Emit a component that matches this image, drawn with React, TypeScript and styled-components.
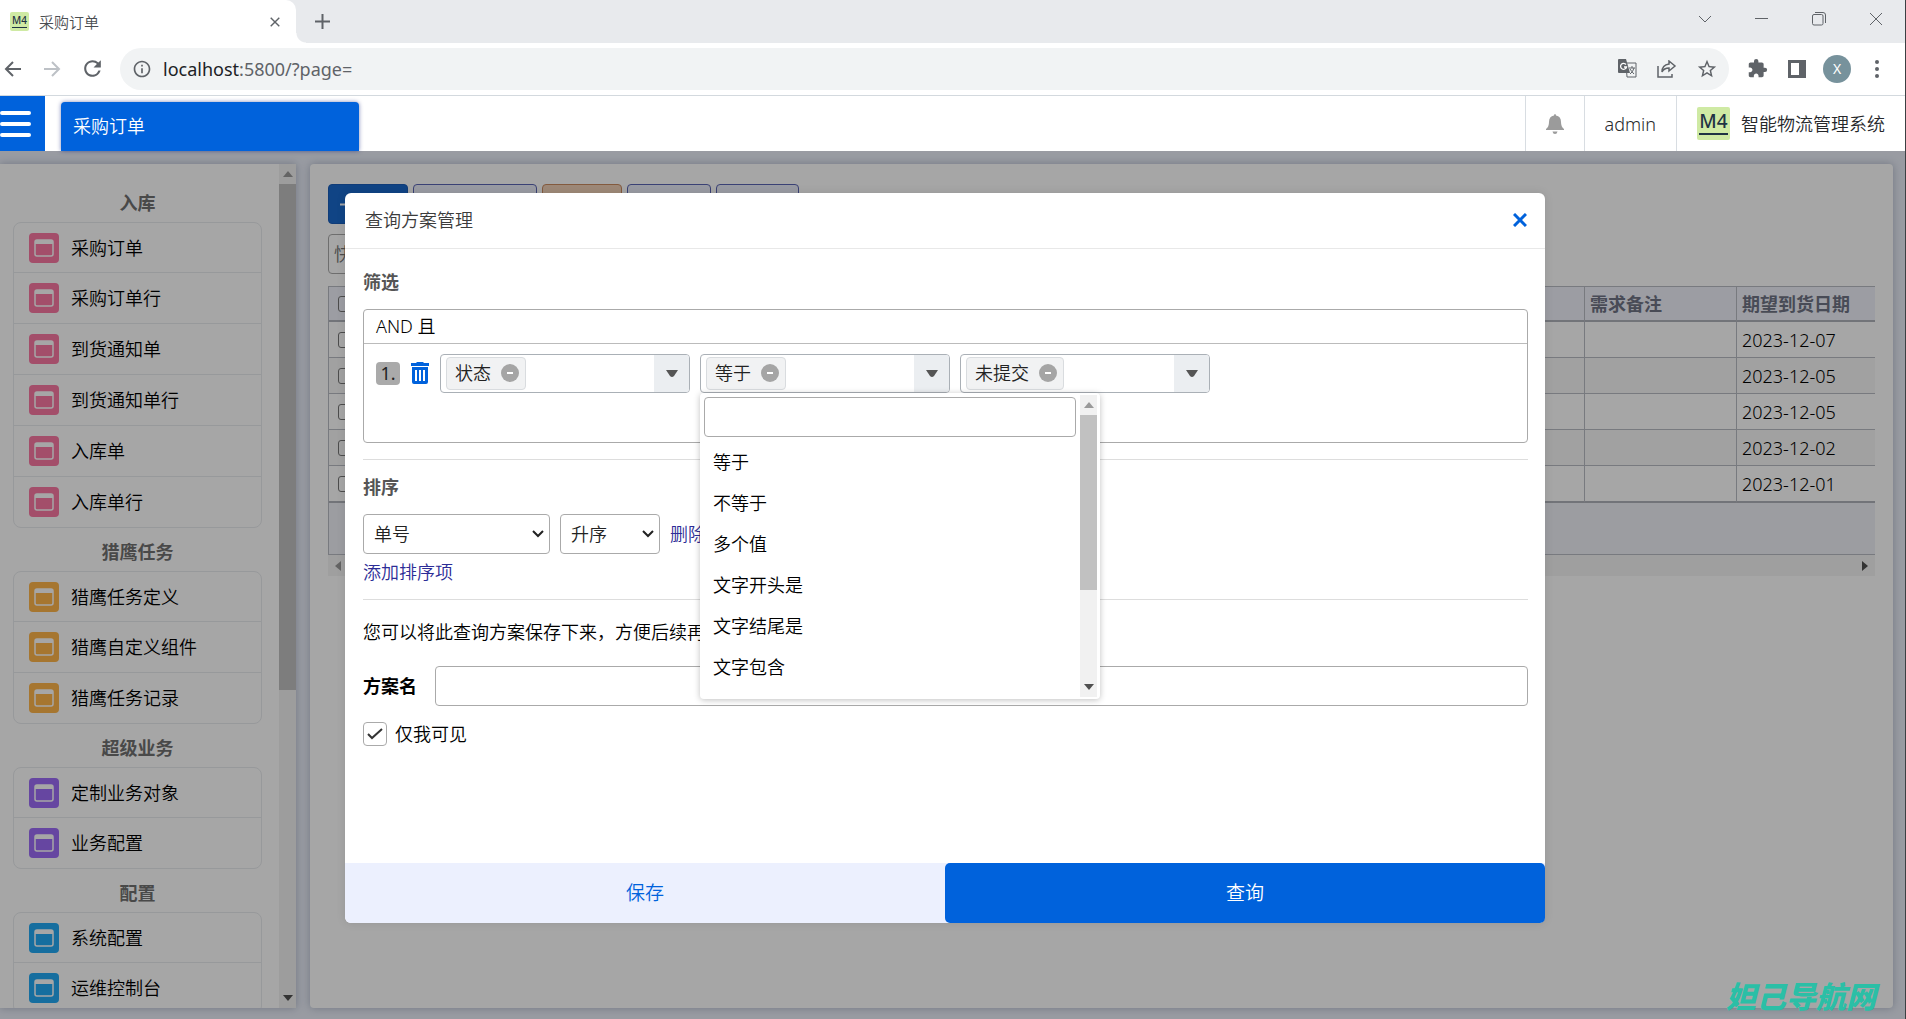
import React, { useState } from 'react';
import styled, { createGlobalStyle } from 'styled-components';
import { MdExtension, MdStarBorder, MdRefresh, MdInfoOutline } from 'react-icons/md';

const FONT = '"Noto Sans", "Noto Sans CJK SC", sans-serif';
const BLUE = '#0062dc';

const Global = createGlobalStyle`
  *, *::before, *::after { box-sizing: border-box; }
  html, body, #root { height: 100%; }
  body { margin: 0; overflow: hidden; font: 350 18px/24px ${FONT}; color: #000; }
  button, input, select { font: inherit; color: inherit; }
  button { padding: 0; border: 0; background: none; cursor: pointer; }
  svg { display: block; flex: none; }
  ul { list-style: none; margin: 0; padding: 0; }
`;

/* ---------- browser frame ---------- */

const Window = styled.div`
  display: flex;
  flex-direction: column;
  height: 100vh;
  border-right: 1px solid #3c4043;
`;

const TabStrip = styled.div`
  display: flex;
  flex: none;
  height: 43px;
  background: #e8eaed;
`;

const BrowserTab = styled.div`
  display: flex;
  align-items: center;
  width: 296px;
  padding: 0 14px 0 10px;
  gap: 10px;
  background: #fff;
  border-top-right-radius: 10px;
  font-size: 15px;
  color: #4a4d51;
`;

const TabTitle = styled.span`
  flex: 1;
`;

const TabFlare = styled.div`
  align-self: flex-end;
  width: 10px;
  height: 10px;
  background: radial-gradient(circle at 100% 0, transparent 9px, #fff 10px);
`;

const IconButton = styled.button<{ $w?: number; $color?: string }>`
  display: flex;
  align-items: center;
  justify-content: center;
  width: ${p => p.$w ?? 24}px;
  color: ${p => p.$color ?? '#5f6368'};
`;

const WindowButtons = styled.div`
  display: flex;
  margin-left: auto;
  padding-bottom: 6px;
`;

const Toolbar = styled.div`
  display: flex;
  flex: none;
  align-items: center;
  height: 53px;
  padding: 0 8px 1px 0;
  background: #fff;
  border-bottom: 1px solid #d3d9de;
`;

const NavButtons = styled.div`
  display: flex;
  width: 120px;
`;

const UrlBar = styled.div`
  display: flex;
  flex: 1;
  align-items: center;
  height: 42px;
  margin-right: 8px;
  padding: 0 2px 0 10px;
  border-radius: 21px;
  background: #f1f3f4;
`;

const Url = styled.p`
  flex: 1;
  margin: 0 0 0 9px;
  color: #5f6368;
  font-weight: 400;

  b { font-weight: 400; color: #202124; }
`;

const Avatar = styled.span`
  display: grid;
  place-items: center;
  width: 28px;
  height: 28px;
  margin: 0 6px;
  border-radius: 50%;
  background: #77929c;
  color: #fff;
  font-size: 14px;
  font-weight: 400;
  line-height: 20px;
`;

const M4 = styled.span<{ $small?: boolean }>`
  display: flex;
  justify-content: center;
  width: ${p => (p.$small ? 19 : 33)}px;
  height: ${p => (p.$small ? 19 : 33)}px;
  padding: ${p => (p.$small ? 1 : 3)}px 2px;
  border-radius: 2px;
  background: #cfeaa4;
  color: #1f3344;
  font-size: ${p => (p.$small ? 10 : 19)}px;
  font-weight: 500;
  line-height: ${p => (p.$small ? 14 : 23)}px;

  span {
    width: 100%;
    height: ${p => (p.$small ? 15 : 25)}px;
    border-bottom: ${p => (p.$small ? 1 : 2)}px solid #1f3344;
    text-align: center;
  }
`;

/* ---------- application ---------- */

const Application = styled.div`
  position: relative;
  display: flex;
  flex: 1;
  flex-direction: column;
  min-height: 0;
  overflow: hidden;
`;

const Header = styled.header`
  position: relative;
  z-index: 2;
  display: flex;
  flex: none;
  height: 55px;
  background: #fff;
`;

const MenuButton = styled.button`
  display: flex;
  align-items: center;
  width: 45px;
  margin-right: 16px;
  background: ${BLUE};
  color: #fff;
`;

const PageTab = styled.button`
  width: 298px;
  margin-top: 6px;
  padding: 0 12px 2px;
  border-radius: 4px 4px 0 0;
  background: ${BLUE};
  box-shadow: 0 0 4px rgba(0, 20, 120, 0.5);
  color: #fff;
  text-align: left;
`;

const HeaderCells = styled.div`
  display: flex;
  margin-left: auto;
`;

const HeaderCell = styled.div`
  display: flex;
  align-items: center;
  gap: 11px;
  padding: 0 20px;
  border-left: 1px solid #d8dde2;
  color: #26282b;
`;

const Workspace = styled.div`
  display: flex;
  flex: 1;
  gap: 14px;
  min-height: 0;
  padding: 13px 12px 11px 0;
  background: #ebeff9;
`;

const panelShadow = '0 0 8px rgba(60, 75, 110, 0.35)';

const Sidebar = styled.nav`
  display: flex;
  width: 296px;
  background: #fff;
  box-shadow: ${panelShadow};
  overflow: hidden;
`;

const SidebarScroll = styled.div`
  flex: 1;
  min-width: 0;
  padding: 15px 17px 0 13px;
  overflow: hidden;
`;

const GroupTitle = styled.h2`
  margin: 0;
  padding: 12px 0 7px;
  color: #707070;
  font-size: 18px;
  font-weight: 700;
  line-height: 24px;
  text-align: center;
`;

const GroupList = styled.ul`
  border: 1px solid #e9ebee;
  border-radius: 8px;
`;

const GroupItem = styled.li`
  &:not(:last-child) > button { border-bottom: 1px solid #e9ebee; }
  &:first-child > button, &:last-child > button { height: 50px; }
`;

const ItemButton = styled.button`
  display: flex;
  align-items: center;
  gap: 12px;
  width: 100%;
  height: 51px;
  padding: 0 15px;
`;

const ItemIcon = styled.span<{ $color: string }>`
  display: grid;
  place-items: center;
  width: 30px;
  height: 30px;
  border-radius: 4px;
  background: ${p => p.$color};
  color: #fff;
`;

const ScrollTrack = styled.div<{ $bg: string }>`
  display: flex;
  flex: none;
  flex-direction: column;
  align-items: center;
  width: 17px;
  background: ${p => p.$bg};
`;

const ScrollThumb = styled.div<{ $size: number }>`
  flex: 0 0 ${p => p.$size}%;
  width: 17px;
  background: #c1c1c1;
`;

const ScrollArrow = styled.div<{ $end?: boolean }>`
  display: grid;
  place-items: center;
  width: 17px;
  height: 20px;
  margin-top: ${p => (p.$end ? 'auto' : 0)};
  color: ${p => (p.$end ? '#505050' : '#9a9a9a')};
`;

const MainPanel = styled.main`
  flex: 1;
  min-width: 0;
  padding: 20px 18px;
  border-radius: 4px;
  background: #fff;
  box-shadow: ${panelShadow};
`;

const Actions = styled.div`
  display: flex;
  gap: 5px;
`;

const Action = styled.button<{ $w: number; $tone?: 'primary' | 'warn' }>`
  width: ${p => p.$w}px;
  height: 40px;
  padding-left: 11px;
  border: 1px solid ${p => (p.$tone === 'primary' ? '#1a5cb8' : p.$tone === 'warn' ? '#c98a60' : '#5a65b4')};
  border-radius: 4px;
  background: ${p => (p.$tone === 'primary' ? '#1a69cc' : p.$tone === 'warn' ? '#f3d3b8' : '#eceefb')};
  color: #fff;
`;

const QuickSearch = styled.input`
  display: block;
  width: 260px;
  height: 40px;
  margin: 10px 0 12px;
  padding: 0 5px;
  border: 1px solid #aaa;
  border-radius: 4px;

  &::placeholder { color: #757575; }
`;

const Table = styled.table`
  width: 100%;
  table-layout: fixed;
  border-collapse: separate;
  border-spacing: 0;
  border-left: 1px solid #b9bcc4;
  border-top: 1px solid #b9bcc4;

  th, td {
    height: 36px;
    padding: 0 5px;
    border-bottom: 1px solid #b9bcc4;
    text-align: left;
  }
  th + th, td + td { border-left: 1px solid #b9bcc4; }
  thead th {
    height: 35px;
    border-bottom: 2px solid #b0b3bb;
    background: #f0f2fb;
    color: #6f7384;
    font-weight: 700;
  }
  tbody tr:nth-child(even) td { background: #f8f8f8; }
  tbody tr:last-child td { height: 37px; border-bottom: 2px solid #b0b3bb; }
  th:first-child, td:first-child { padding-left: 9px; }
  tfoot td { height: 52px; background: #f0f1f7; }
`;

const RowCheck = styled.input`
  display: block;
  appearance: none;
  width: 16px;
  height: 16px;
  margin: 0;
  border: 1px solid #777;
  border-radius: 3px;
`;

const HScroll = styled.div`
  display: flex;
  align-items: center;
  justify-content: space-between;
  height: 21px;
  padding: 0 7px;
  background: #f5f5f5;
  color: #505050;

  > :first-child { color: #9a9a9a; }
`;

/* ---------- dialog ---------- */

const Overlay = styled.div`
  position: absolute;
  inset: 0;
  z-index: 1;
  display: flex;
  align-items: center;
  justify-content: center;
  padding-right: 15px;
  background: rgba(0, 0, 0, 0.35);
`;

const Dialog = styled.section`
  display: flex;
  flex-direction: column;
  width: 1200px;
  min-height: 730px;
  border-radius: 6px;
  background: #fff;
  box-shadow: 0 0 10px rgba(0, 0, 0, 0.1);
`;

const DialogHead = styled.div`
  display: flex;
  align-items: center;
  justify-content: space-between;
  height: 56px;
  padding: 0 18px 0 20px;
  border-bottom: 1px solid #e8e8e8;
`;

const DialogTitle = styled.h1`
  margin: 0;
  color: #3c3c3c;
  font-size: 18px;
  font-weight: 350;
`;

const DialogBody = styled.div`
  flex: 1;
  padding: 20px 17px 20px 18px;
`;

const SectionTitle = styled.h2`
  margin: 0 0 14px;
  color: #555;
  font-size: 18px;
  font-weight: 700;
  line-height: 26px;
`;

const FilterBox = styled.div`
  min-height: 134px;
  border: 1px solid #aaa;
  border-radius: 4px;
`;

const FilterHead = styled.div`
  height: 34px;
  padding: 0 12px;
  border-bottom: 1px solid #bbb;
  line-height: 32px;
`;

const Condition = styled.div`
  display: flex;
  align-items: center;
  gap: 10px;
  padding: 10px 12px;
`;

const Index = styled.span`
  width: 24px;
  height: 23px;
  border-radius: 4px;
  background: #aaa;
  color: #222;
  font-weight: 400;
  line-height: 22px;
  text-align: center;
`;

const Combo = styled.div`
  position: relative;
  display: flex;
  width: 250px;
  height: 39px;
  border: 1px solid #aab0b6;
  border-radius: 4px;
`;

const Chip = styled.span`
  display: flex;
  align-items: center;
  gap: 10px;
  margin: 2px auto 2px 5px;
  padding: 0 6px 0 8px;
  border: 1px solid #d9dcdf;
  border-radius: 4px;
  background: #f1f2f3;
  color: #222;
`;

const ComboToggle = styled.button`
  display: grid;
  place-items: center;
  width: 35px;
  border-radius: 0 3px 3px 0;
  background: #ebeef1;
  color: #555;
`;

const Dropdown = styled.div`
  position: absolute;
  top: 38px;
  left: -1px;
  z-index: 3;
  display: flex;
  width: 400px;
  height: 306px;
  padding: 2px 3px 2px 0;
  border-radius: 4px;
  background: #fff;
  box-shadow: 0 1px 6px rgba(0, 0, 0, 0.25);
  overflow: hidden;
`;

const DropdownList = styled.div`
  flex: 1;
  padding: 2px 4px 0;
  overflow: hidden;
`;

const TextInput = styled.input`
  flex: 1;
  min-width: 0;
  width: 100%;
  height: 40px;
  padding: 0 10px;
  border: 1px solid #aaa;
  border-radius: 4px;
  background: #fff;
`;

const Option = styled.li`
  height: 41px;
  padding: 0 9px;
  line-height: 41px;
`;

const OptionList = styled.ul`
  padding-top: 5px;
`;

const Rule = styled.hr`
  height: 1px;
  margin: 16px 0 14px;
  border: 0;
  background: #ddd;
`;

const FormRow = styled.div`
  display: flex;
  align-items: center;
  gap: 10px;
`;

const SelectWrap = styled.span<{ $w: number }>`
  display: grid;
  align-items: center;
  width: ${p => p.$w}px;

  > * { grid-area: 1 / 1; }
  > svg { justify-self: end; margin-right: 6px; pointer-events: none; }
`;

const Select = styled.select`
  appearance: none;
  width: 100%;
  height: 40px;
  padding: 0 10px;
  border: 1px solid #aaa;
  border-radius: 4px;
  background: #fff;
  color: #222;
`;

const TextLink = styled.a`
  color: #2c2c96;
  text-decoration: none;
`;

const AddSort = styled.p`
  margin: 7px 0 0;
  line-height: 22px;
`;

const Hint = styled.p`
  margin: 20px 0 22px;
  line-height: 24px;
`;

const NameLabel = styled.label`
  width: 62px;
  font-weight: 700;
`;

const CheckRow = styled.label`
  display: flex;
  align-items: center;
  gap: 8px;
  margin-top: 16px;
`;

const Check = styled.input`
  appearance: none;
  width: 24px;
  height: 24px;
  margin: 0;
  border: 1px solid #aaa;
  border-radius: 4px;
`;

const CheckBox = styled.span`
  display: grid;
  place-items: center;

  > * { grid-area: 1 / 1; }
  > svg { pointer-events: none; }
`;

const DialogFoot = styled.div`
  display: flex;
  height: 60px;
  border-radius: 0 0 6px 6px;
  background: #ecf0fe;
`;

const FootButton = styled.button<{ $primary?: boolean }>`
  flex: 1;
  border-radius: 5px;
  background: ${p => (p.$primary ? BLUE : 'transparent')};
  color: ${p => (p.$primary ? '#fff' : BLUE)};
  font-size: 19px;
`;

const Watermark = styled.div`
  position: absolute;
  right: 29px;
  bottom: 4px;
  z-index: 4;
  color: #2bbfa6;
  font-size: 30px;
  font-style: italic;
  font-weight: 900;
  line-height: 36px;
`;

/* ---------- drawings ---------- */

const Cross = ({ size = 14, w = 2 }: { size?: number; w?: number }) => (
  <svg width={size} height={size} viewBox="0 0 14 14" stroke="currentColor" strokeWidth={w} fill="none">
    <path d="M1 1l12 12M13 1L1 13" />
  </svg>
);

const Triangle = ({ d, w = 10, h = 6 }: { d: string; w?: number; h?: number }) => (
  <svg width={w} height={h} viewBox={`0 0 ${w} ${h}`} fill="currentColor"><path d={d} /></svg>
);
const Up = () => <Triangle d="M0 6l5-6 5 6z" />;
const Down = () => <Triangle d="M0 0l5 6 5-6z" />;

const Chevron = () => (
  <svg width="12" height="8" viewBox="0 0 12 8" fill="none" stroke="#222" strokeWidth="2"><path d="M1 1l5 5 5-5" /></svg>
);

const Arrow = ({ flip }: { flip?: boolean }) => (
  <svg width="18" height="16" viewBox="0 0 18 16" fill="none" stroke="currentColor" strokeWidth="2">
    {flip ? <path d="M1 8h15M9 1l7 7-7 7" /> : <path d="M17 8H2M9 1L2 8l7 7" />}
  </svg>
);

const WindowIcon = () => (
  <svg width="20" height="18" viewBox="0 0 20 18">
    <rect x="1" y="1" width="18" height="16" rx="2" fill="none" stroke="currentColor" strokeWidth="1.500" />
    <path d="M1 1h18v4H1z" fill="currentColor" />
  </svg>
);

const Trash = () => (
  <svg width="20" height="24" viewBox="0 0 20 24" fill={BLUE}>
    <path fillRule="evenodd" d="M7 1h6l1 1h5v3H1V2h5zM2 6h16v15q0 2-2 2H4q-2 0-2-2zM5 9v11h2V9zm4 0v11h2V9zm4 0v11h2V9z" />
  </svg>
);

const Minus = () => (
  <svg width="18" height="18" viewBox="0 0 18 18"><circle cx="9" cy="9" r="9" fill="#a5a5a5" /><path d="M6 9h6" stroke="#fff" strokeWidth="2" /></svg>
);

const Bell = () => (
  <svg width="18" height="20" viewBox="0 0 18 20" fill="#9b9b9b">
    <path d="M9 0q1 0 1 1.600q5 1 5 6.400q0 5 3 7v1H0v-1q3-2 3-7q0-5.400 5-6.400Q8 0 9 0zM6.500 17.500h5Q11 20 9 20t-2.500-2.500z" />
  </svg>
);

const Logo = ({ small }: { small?: boolean }) => <M4 $small={small}><span>M4</span></M4>;

/* ---------- data ---------- */

const groups = [
  { title: '入库', color: '#fa78a4', items: ['采购订单', '采购订单行', '到货通知单', '到货通知单行', '入库单', '入库单行'] },
  { title: '猎鹰任务', color: '#ffb54a', items: ['猎鹰任务定义', '猎鹰自定义组件', '猎鹰任务记录'] },
  { title: '超级业务', color: '#9d6cf8', items: ['定制业务对象', '业务配置'] },
  { title: '配置', color: '#22aaf4', items: ['系统配置', '运维控制台'] },
];

const dates = ['2023-12-07', '2023-12-05', '2023-12-05', '2023-12-02', '2023-12-01'];
const operators = ['等于', '不等于', '多个值', '文字开头是', '文字结尾是', '文字包含'];

function FilterCombo({ value, children }: { value: string; children?: React.ReactNode }) {
  return (
    <Combo>
      <Chip>{value}<IconButton $w={18} aria-label={`移除${value}`}><Minus /></IconButton></Chip>
      <ComboToggle aria-label="展开"><Triangle d="M0 0h12l-4 6q-2 2-4 0z" w={12} h={7} /></ComboToggle>
      {children}
    </Combo>
  );
}

export default function App() {
  const [mine, setMine] = useState(true);
  return (
    <Window>
      <Global />
      <TabStrip>
        <BrowserTab>
          <Logo small />
          <TabTitle>采购订单</TabTitle>
          <IconButton $w={14} aria-label="关闭标签页"><Cross size={10} /></IconButton>
        </BrowserTab>
        <TabFlare />
        <IconButton $w={32} aria-label="新建标签页">
          <svg width="15" height="15" viewBox="0 0 15 15" stroke="currentColor" strokeWidth="2"><path d="M7.500 0v15M0 7.500h15" /></svg>
        </IconButton>
        <WindowButtons>
          <IconButton $w={56} aria-label="标签页列表">
            <svg width="14" height="8" viewBox="0 0 14 8" fill="none" stroke="currentColor"><path d="M1 1l6 6 6-6" /></svg>
          </IconButton>
          <IconButton $w={57} aria-label="最小化">
            <svg width="13" height="2" viewBox="0 0 13 2" stroke="currentColor"><path d="M0 .5h13" /></svg>
          </IconButton>
          <IconButton $w={57} aria-label="还原">
            <svg width="14" height="14" viewBox="0 0 14 14" fill="none" stroke="currentColor"><rect x=".5" y="2.500" width="10.500" height="10.500" rx="1.500" /><path d="M3 .5h8q2.500 0 2.500 2.500v8" /></svg>
          </IconButton>
          <IconButton $w={58} aria-label="关闭"><Cross size={14} w={1} /></IconButton>
        </WindowButtons>
      </TabStrip>
      <Toolbar>
        <NavButtons>
          <IconButton $w={25} aria-label="后退"><Arrow /></IconButton>
          <IconButton $w={54} $color="#bdc1c6" aria-label="前进"><Arrow flip /></IconButton>
          <IconButton $w={26} aria-label="刷新"><MdRefresh size={25} /></IconButton>
        </NavButtons>
        <UrlBar>
          <IconButton $w={24} aria-label="网站信息"><MdInfoOutline size={20} /></IconButton>
          <Url><b>localhost</b>:5800/?page=</Url>
          <IconButton $w={40} aria-label="翻译">
            <svg width="19" height="19" viewBox="0 0 19 19">
              <path d="M8 4h10v14H9z" fill="none" stroke="#5f6368" />
              <path d="M1 0h7l4 14H1q-1 0-1-1V1q0-1 1-1z" fill="#5f6368" />
              <path d="M11 9h6M14 7v2M16 9q-1 4-4 6M12 10q2 3 4 5" fill="none" stroke="currentColor" />
              <path d="M8 5.500a3 3 0 1 0 .5 2.500H6" fill="none" stroke="#fff" strokeWidth="1.300" />
            </svg>
          </IconButton>
          <IconButton $w={40} aria-label="分享">
            <svg width="20" height="18" viewBox="0 0 20 18" fill="none" stroke="currentColor" strokeWidth="1.500"><path d="M1 6v11h14v-3M12 1l6 5-6 5V8q-5 0-7 4 0-7 7-8z" /></svg>
          </IconButton>
          <IconButton $w={40} aria-label="收藏"><MdStarBorder size={22} /></IconButton>
        </UrlBar>
        <IconButton $w={40} aria-label="扩展程序"><MdExtension size={21} /></IconButton>
        <IconButton $w={40} aria-label="侧边栏">
          <svg width="18" height="18" viewBox="0 0 18 18"><path d="M1.500 1.500h15v15h-15z" fill="none" stroke="currentColor" strokeWidth="3" /><path d="M11 0h7v18h-7z" fill="currentColor" /></svg>
        </IconButton>
        <Avatar>X</Avatar>
        <IconButton $w={40} aria-label="更多">
          <svg width="4" height="18" viewBox="0 0 4 18" fill="currentColor"><circle cx="2" cy="2" r="2" /><circle cx="2" cy="9" r="2" /><circle cx="2" cy="16" r="2" /></svg>
        </IconButton>
      </Toolbar>

      <Application>
        <Header>
          <MenuButton aria-label="菜单">
            <svg width="31" height="28" viewBox="0 0 31 28" stroke="currentColor" strokeWidth="4" strokeLinecap="round"><path d="M2 3h27M2 14h27M2 25h27" /></svg>
          </MenuButton>
          <PageTab>采购订单</PageTab>
          <HeaderCells>
            <HeaderCell><IconButton $w={18} aria-label="通知"><Bell /></IconButton></HeaderCell>
            <HeaderCell>admin</HeaderCell>
            <HeaderCell><Logo />智能物流管理系统</HeaderCell>
          </HeaderCells>
        </Header>

        <Workspace>
          <Sidebar>
            <SidebarScroll>
              {groups.map(g => (
                <section key={g.title}>
                  <GroupTitle>{g.title}</GroupTitle>
                  <GroupList>
                    {g.items.map(name => (
                      <GroupItem key={name}>
                        <ItemButton><ItemIcon $color={g.color}><WindowIcon /></ItemIcon>{name}</ItemButton>
                      </GroupItem>
                    ))}
                  </GroupList>
                </section>
              ))}
            </SidebarScroll>
            <ScrollTrack $bg="#f1f1f1">
              <ScrollArrow><Up /></ScrollArrow>
              <ScrollThumb $size={60} />
              <ScrollArrow $end><Down /></ScrollArrow>
            </ScrollTrack>
          </Sidebar>

          <MainPanel>
            <Actions>
              <Action $w={80} $tone="primary" aria-label="新增">
                <svg width="15" height="15" viewBox="0 0 15 15" stroke="currentColor" strokeWidth="2"><path d="M7.500 0v15M0 7.500h15" /></svg>
              </Action>
              <Action $w={124} aria-label="查询方案" />
              <Action $w={80} $tone="warn" aria-label="删除" />
              <Action $w={84} aria-label="导出" />
              <Action $w={83} aria-label="导入" />
            </Actions>
            <QuickSearch placeholder="快" aria-label="快速搜索" />
            <Table>
              <colgroup><col /><col width="152" /><col width="139" /></colgroup>
              <thead>
                <tr>
                  <th><RowCheck type="checkbox" aria-label="全选" /></th>
                  <th>需求备注</th>
                  <th>期望到货日期</th>
                </tr>
              </thead>
              <tbody>
                {dates.map((d, i) => (
                  <tr key={i}>
                    <td><RowCheck type="checkbox" aria-label={`选择第${i + 1}行`} /></td>
                    <td />
                    <td>{d}</td>
                  </tr>
                ))}
              </tbody>
              <tfoot><tr><td colSpan={3} /></tr></tfoot>
            </Table>
            <HScroll>
              <Triangle d="M6 0L0 5l6 5z" w={6} h={10} />
              <Triangle d="M0 0l6 5-6 5z" w={6} h={10} />
            </HScroll>
          </MainPanel>
        </Workspace>

        <Overlay>
          <Dialog role="dialog" aria-labelledby="dialog-title">
            <DialogHead>
              <DialogTitle id="dialog-title">查询方案管理</DialogTitle>
              <IconButton $w={14} $color={BLUE} aria-label="关闭对话框"><Cross w={3} /></IconButton>
            </DialogHead>
            <DialogBody>
              <SectionTitle>筛选</SectionTitle>
              <FilterBox>
                <FilterHead>AND 且</FilterHead>
                <Condition>
                  <Index>1.</Index>
                  <IconButton $w={20} aria-label="删除条件"><Trash /></IconButton>
                  <FilterCombo value="状态" />
                  <FilterCombo value="等于">
                    <Dropdown>
                      <DropdownList>
                        <TextInput aria-label="搜索选项" />
                        <OptionList role="listbox">
                          {operators.map(o => <Option role="option" key={o}>{o}</Option>)}
                        </OptionList>
                      </DropdownList>
                      <ScrollTrack $bg="#f1f1f1">
                        <ScrollArrow><Up /></ScrollArrow>
                        <ScrollThumb $size={58} />
                        <ScrollArrow $end><Down /></ScrollArrow>
                      </ScrollTrack>
                    </Dropdown>
                  </FilterCombo>
                  <FilterCombo value="未提交" />
                </Condition>
              </FilterBox>
              <Rule />
              <SectionTitle>排序</SectionTitle>
              <FormRow>
                <SelectWrap $w={187}>
                  <Select aria-label="排序字段"><option>单号</option></Select>
                  <Chevron />
                </SelectWrap>
                <SelectWrap $w={100}>
                  <Select aria-label="排序方向"><option>升序</option><option>降序</option></Select>
                  <Chevron />
                </SelectWrap>
                <TextLink href="#">删除</TextLink>
              </FormRow>
              <AddSort><TextLink href="#">添加排序项</TextLink></AddSort>
              <Rule />
              <Hint>您可以将此查询方案保存下来，方便后续再次</Hint>
              <FormRow>
                <NameLabel htmlFor="plan-name">方案名</NameLabel>
                <TextInput id="plan-name" />
              </FormRow>
              <CheckRow>
                <CheckBox>
                  <Check type="checkbox" checked={mine} onChange={e => setMine(e.target.checked)} />
                  {mine && (
                    <svg width="16" height="12" viewBox="0 0 16 12" fill="none" stroke="#333" strokeWidth="2"><path d="M1 6l4 4 10-9" /></svg>
                  )}
                </CheckBox>
                仅我可见
              </CheckRow>
            </DialogBody>
            <DialogFoot>
              <FootButton>保存</FootButton>
              <FootButton $primary>查询</FootButton>
            </DialogFoot>
          </Dialog>
        </Overlay>
        <Watermark>妲己导航网</Watermark>
      </Application>
    </Window>
  );
}
